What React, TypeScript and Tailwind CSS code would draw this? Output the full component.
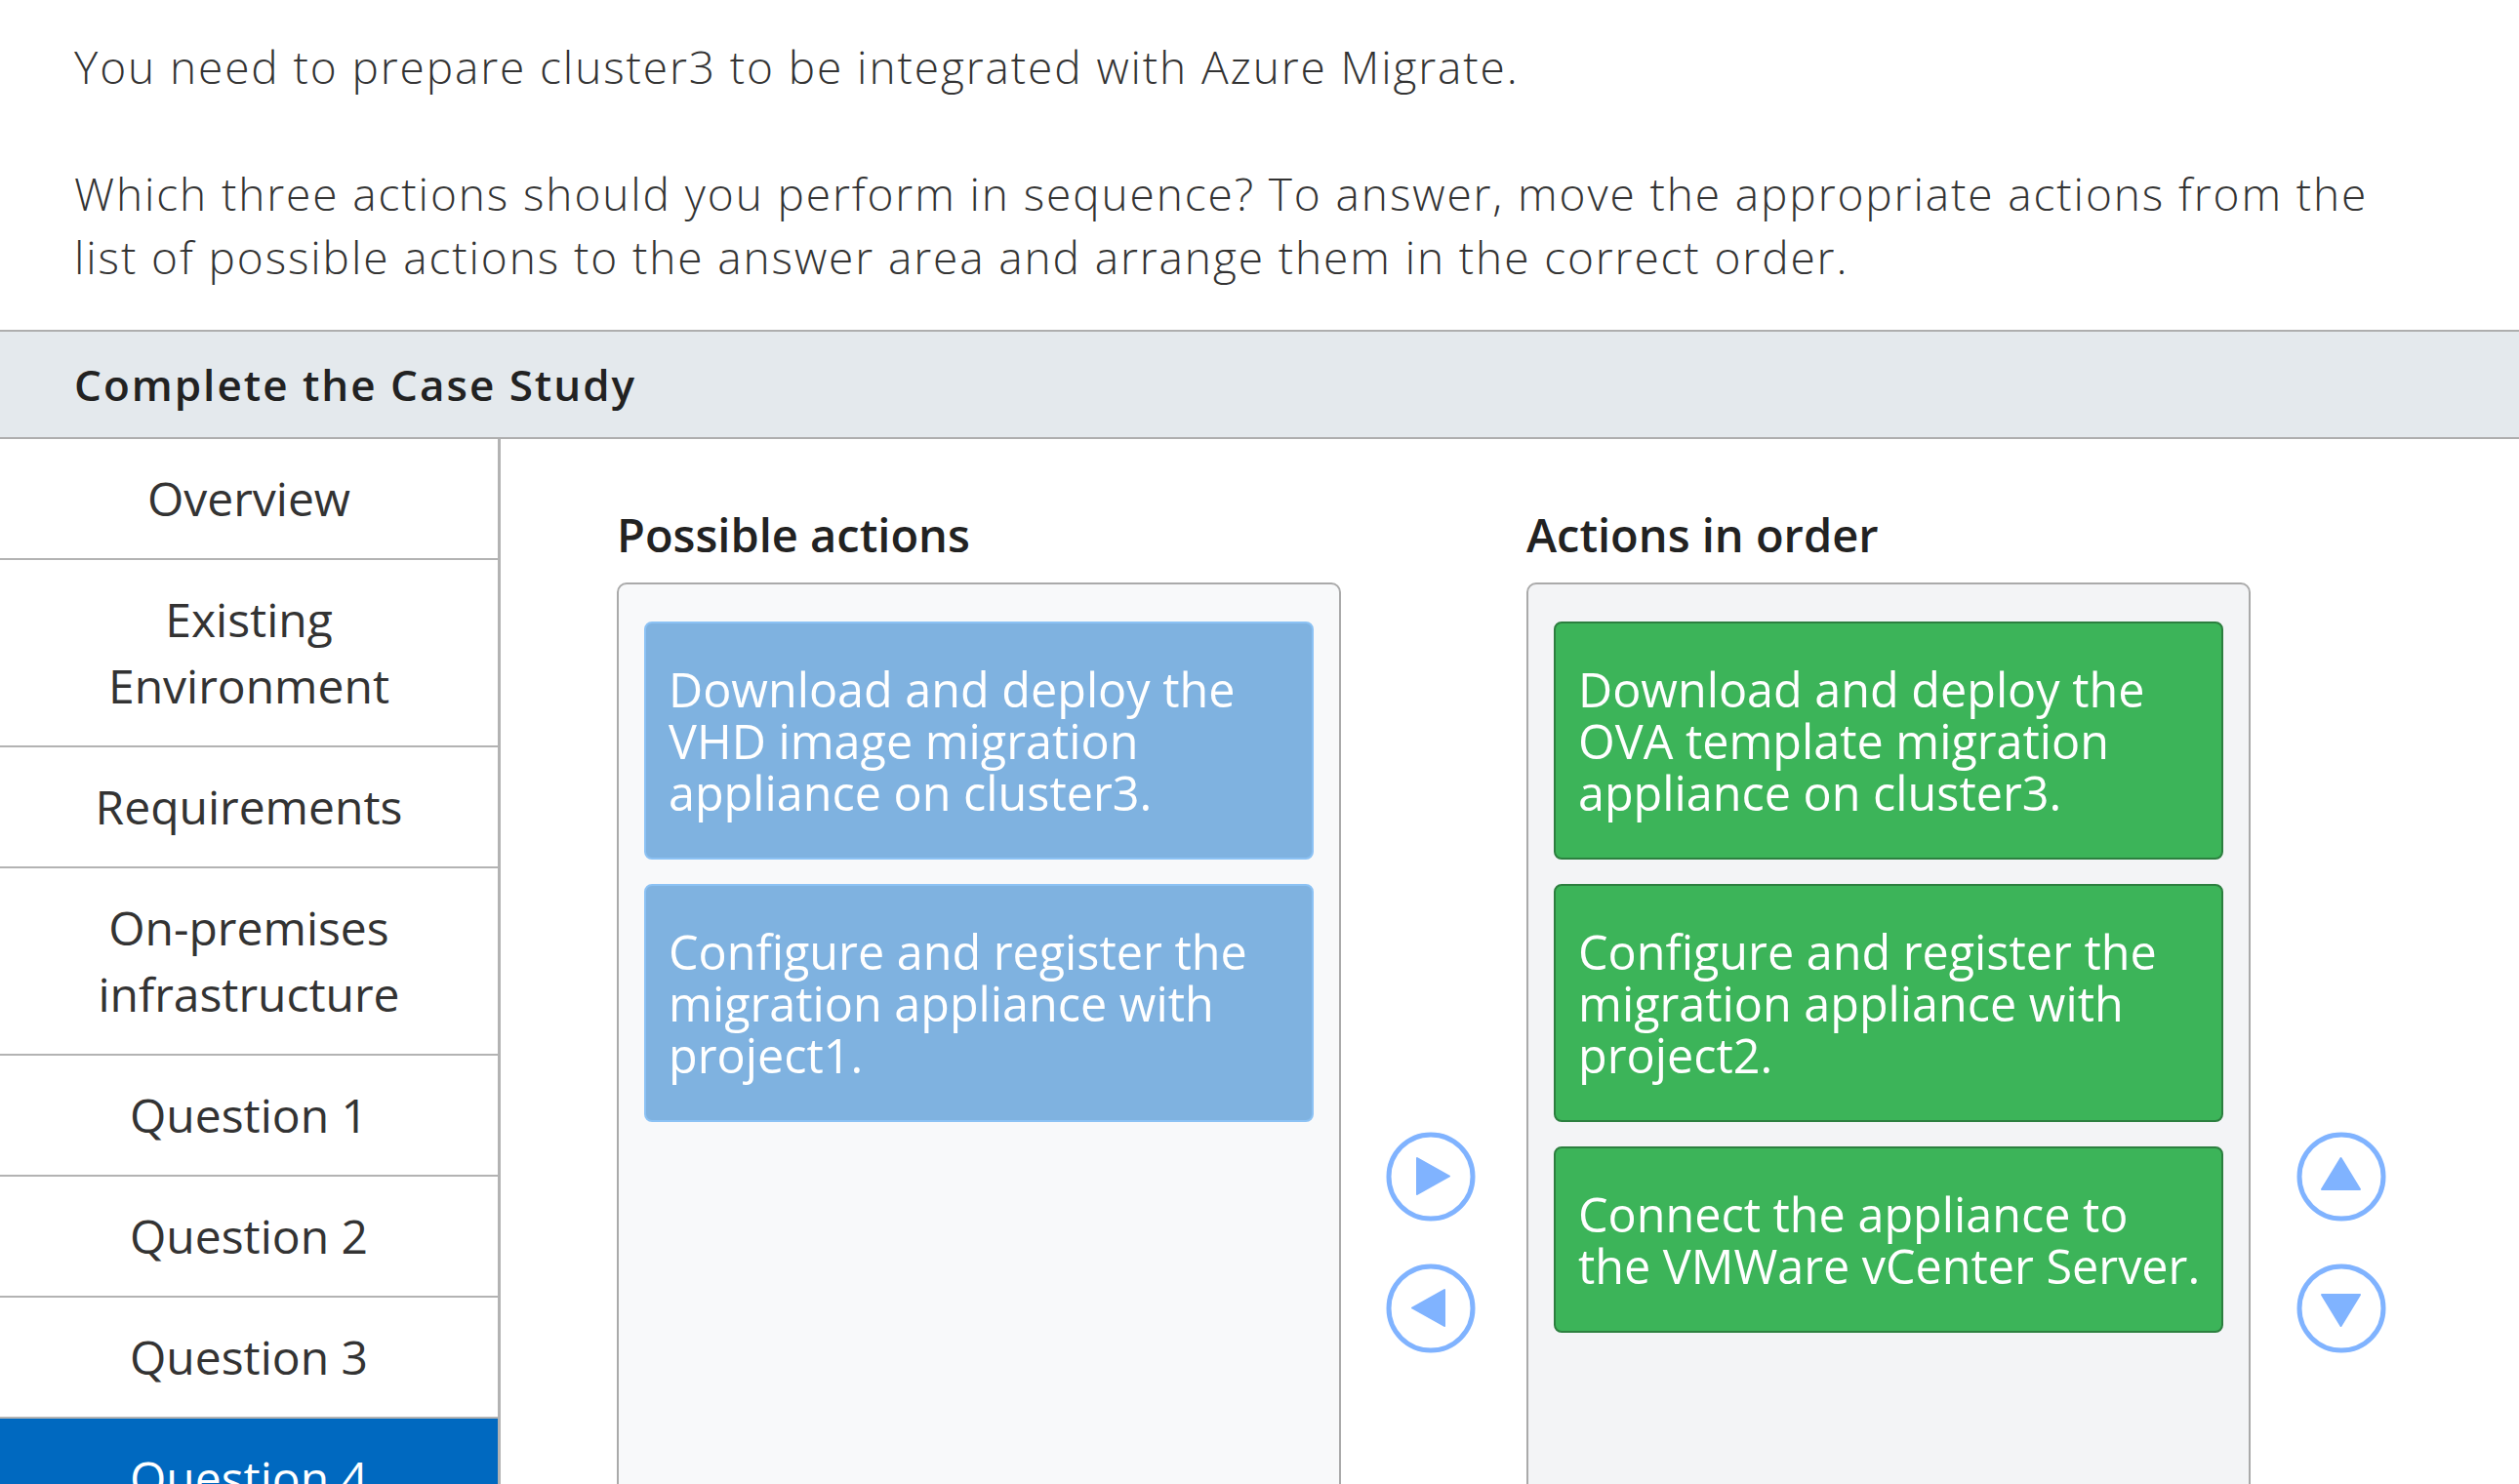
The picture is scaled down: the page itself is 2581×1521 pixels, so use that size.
import React from "react";

const sideItems: { label: string[]; active?: boolean }[] = [
  { label: ["Overview"] },
  { label: ["Existing", "Environment"] },
  { label: ["Requirements"] },
  { label: ["On-premises", "infrastructure"] },
  { label: ["Question 1"] },
  { label: ["Question 2"] },
  { label: ["Question 3"] },
  { label: ["Question 4"], active: true },
];

const possible: string[][] = [
  ["Download and deploy the", "VHD image migration", "appliance on cluster3."],
  ["Configure and register the", "migration appliance with", "project1."],
];

const ordered: string[][] = [
  ["Download and deploy the", "OVA template migration", "appliance on cluster3."],
  ["Configure and register the", "migration appliance with", "project2."],
  ["Connect the appliance to", "the VMWare vCenter Server."],
];

function CircleBtn({ dir }: { dir: "right" | "left" | "up" | "down" }) {
  const pts = {
    right: "32,27 65,45.5 32,64",
    left: "60,27 27,45.5 60,64",
    up: "26,59 45.5,27 65,59",
    down: "26,32 65,32 45.5,64",
  }[dir];
  return (
    <svg width="92" height="92" viewBox="0 0 92 92" className="block">
      <circle cx="46" cy="46" r="43" fill="#ffffff" stroke="#80b3ff" strokeWidth="5" />
      <polygon points={pts} fill="#80b3ff" stroke="#80b3ff" strokeWidth="2" strokeLinejoin="round" />
    </svg>
  );
}

function Card({ lines, green }: { lines: string[]; green?: boolean }) {
  return (
    <div
      className={
        green
          ? "rounded-[8px] border-2 border-[#2c7f3f] bg-[#3cb459] px-[23px] py-[40.5px] text-white"
          : "rounded-[8px] border-2 border-[#8cc2f4] bg-[#7fb2e0] px-[23px] py-[40.5px] text-white"
      }
    >
      {lines.map((l, i) => (
        <div key={i} className="whitespace-nowrap text-[48.5px] leading-[53px]">
          {l}
        </div>
      ))}
    </div>
  );
}

export default function App() {
  return (
    <div className="h-[1521px] w-full overflow-hidden bg-white font-['Open_Sans',sans-serif] text-[#333333]">
      <div className="px-[76px] pt-[36px] pb-[42px] text-[46px] font-[350] leading-[65px] tracking-[1.9px] text-[#333333]">
        <p className="whitespace-nowrap">You need to prepare cluster3 to be integrated with Azure Migrate.</p>
        <p className="mt-[65px] whitespace-nowrap">
          Which three actions should you perform in sequence? To answer, move the appropriate actions from the
          <br />
          list of possible actions to the answer area and arrange them in the correct order.
        </p>
      </div>

      <div className="flex h-[112px] items-center border-y-2 border-[#aeaeae] bg-[#e4e9ed] pl-[76px]">
        <span className="text-[44px] font-semibold tracking-[2px] text-[#222222]">Complete the Case Study</span>
      </div>

      <div className="flex">
        <div className="w-[513px] shrink-0 border-r-[3px] border-[#b3b3b3]">
          {sideItems.map((it, i) => (
            <div
              key={i}
              className={
                it.active
                  ? "bg-[#0069c0] py-[27px] text-center text-[48px] leading-[68px] text-white"
                  : "border-b-2 border-[#b3b3b3] py-[27px] text-center text-[48px] leading-[68px] text-[#333333]"
              }
            >
              {it.label.map((l, j) => (
                <div key={j}>{l}</div>
              ))}
            </div>
          ))}
        </div>

        <div className="flex flex-1 pl-[119px] pt-[68px]">
          <div className="w-[742px] shrink-0">
            <div className="text-[47px] font-semibold leading-[60px] text-[#222222]">Possible actions</div>
            <div className="mt-[19px] h-[1000px] rounded-[10px] border-2 border-[#aaaaaa] bg-[#f8f9fa] px-[26px] pt-[38px]">
              <div className="flex flex-col gap-[25px]">
                {possible.map((c, i) => (
                  <Card key={i} lines={c} />
                ))}
              </div>
            </div>
          </div>

          <div className="ml-[46px] flex w-[92px] shrink-0 flex-col gap-[43px] pt-[642px]">
            <CircleBtn dir="right" />
            <CircleBtn dir="left" />
          </div>

          <div className="ml-[52px] w-[742px] shrink-0">
            <div className="text-[47px] font-semibold leading-[60px] text-[#222222]">Actions in order</div>
            <div className="mt-[19px] h-[1000px] rounded-[10px] border-2 border-[#aaaaaa] bg-[#f3f4f6] px-[26px] pt-[38px]">
              <div className="flex flex-col gap-[25px]">
                {ordered.map((c, i) => (
                  <Card key={i} lines={c} green />
                ))}
              </div>
            </div>
          </div>

          <div className="ml-[47px] flex w-[92px] shrink-0 flex-col gap-[43px] pt-[642px]">
            <CircleBtn dir="up" />
            <CircleBtn dir="down" />
          </div>
        </div>
      </div>
    </div>
  );
}
